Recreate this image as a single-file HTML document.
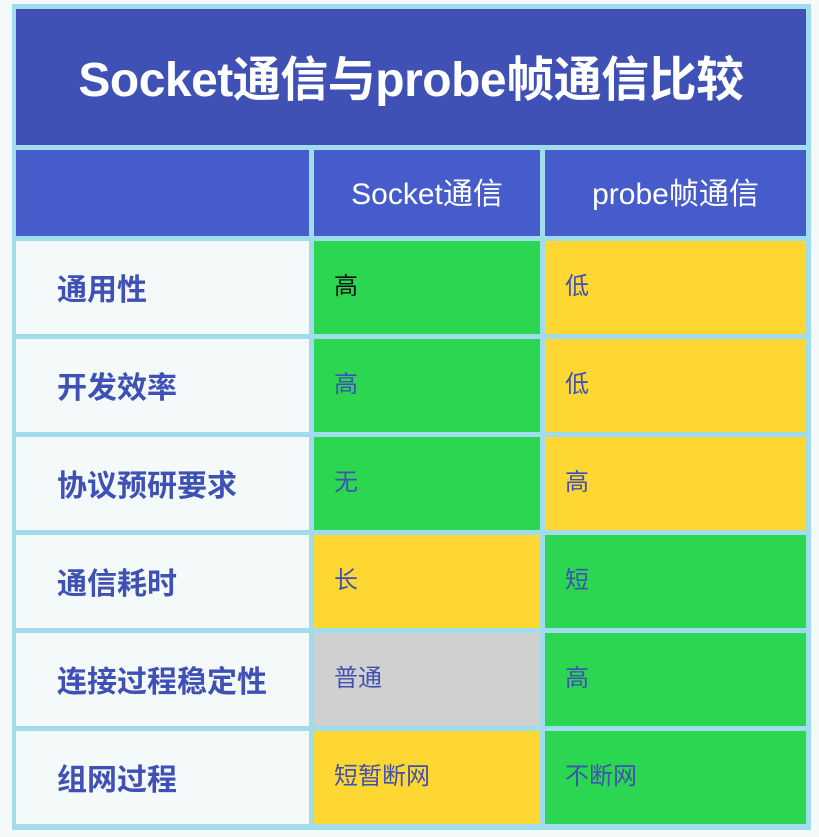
<!DOCTYPE html>
<html><head><meta charset="utf-8"><style>
body{margin:0;width:819px;height:837px;background:#f4f9f9;position:relative;overflow:hidden;font-family:"Liberation Sans","Noto Sans CJK SC",sans-serif}
.f{position:absolute;background:#a0dcec;left:12px;top:4px;width:799px;height:826px}
.c{position:absolute;display:flex;align-items:center;box-sizing:border-box;white-space:nowrap}
.t{left:16px;top:9px;width:790px;height:136px;background:#3f51b5;color:#fff;font-weight:bold;font-size:48px;justify-content:center;letter-spacing:-0.5px;padding-bottom:4px}
.h{background:#475ccb;color:#fff;font-size:30px;justify-content:center;top:150px;height:86px;padding-bottom:4px}
.l{left:16px;width:293px;background:#f4f9f9;color:#3f51b5;font-weight:bold;font-size:30px;padding-left:41px;padding-bottom:2px}
.a{left:314px;width:226px;font-size:24px;color:#3f51b5;padding-left:20px;padding-bottom:8px}
.b{left:545px;width:261px;font-size:24px;color:#3f51b5;padding-left:20px;padding-bottom:8px}
.g{background:#2bd651}.y{background:#fed733}.s{background:#d0d0d0}
</style></head><body>
<div class="f"></div>
<div class="c t">Socket通信与probe帧通信比较</div>
<div class="c h" style="left:16px;width:293px"></div>
<div class="c h" style="left:314px;width:226px">Socket通信</div>
<div class="c h" style="left:545px;width:261px">probe帧通信</div>

<div class="c l" style="top:241px;height:93px">通用性</div>
<div class="c a g" style="top:241px;height:93px;color:#111">高</div>
<div class="c b y" style="top:241px;height:93px">低</div>

<div class="c l" style="top:339px;height:93px">开发效率</div>
<div class="c a g" style="top:339px;height:93px">高</div>
<div class="c b y" style="top:339px;height:93px">低</div>

<div class="c l" style="top:437px;height:93px">协议预研要求</div>
<div class="c a g" style="top:437px;height:93px">无</div>
<div class="c b y" style="top:437px;height:93px">高</div>

<div class="c l" style="top:535px;height:93px">通信耗时</div>
<div class="c a y" style="top:535px;height:93px">长</div>
<div class="c b g" style="top:535px;height:93px">短</div>

<div class="c l" style="top:633px;height:93px">连接过程稳定性</div>
<div class="c a s" style="top:633px;height:93px">普通</div>
<div class="c b g" style="top:633px;height:93px">高</div>

<div class="c l" style="top:731px;height:93px">组网过程</div>
<div class="c a y" style="top:731px;height:93px">短暂断网</div>
<div class="c b g" style="top:731px;height:93px">不断网</div>
</body></html>
